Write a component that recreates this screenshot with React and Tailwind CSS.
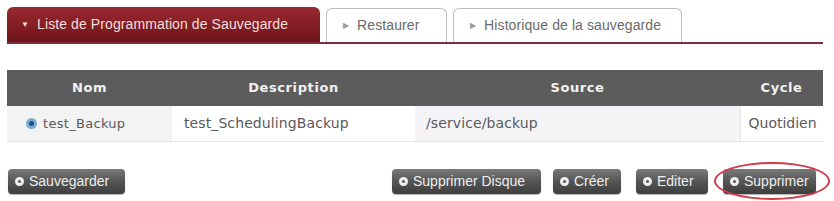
function Tab({ active, children }) {
  if (active) {
    return (
      <div className="flex h-[35px] w-[313px] items-center rounded-t-[6px] bg-gradient-to-b from-[#9a2a30] to-[#6e1419] pl-[14px] text-[14px] tracking-[0.1px] text-[#f3dede]">
        <span className="mr-[8px] text-[8px]">▼</span>
        {children}
      </div>
    );
  }
  return (
    <div className="mt-[1px] flex h-[34px] items-center rounded-t-[6px] border border-b-0 border-[#bdbdbd] bg-white pl-[16px] text-[14px] tracking-[0.1px] text-[#6a6a6a]">
      <span className="mr-[8px] text-[8px] text-[#999]">▶</span>
      {children}
    </div>
  );
}

function Btn({ children, w }) {
  return (
    <div
      className={`flex h-[25px] items-center rounded-[4px] bg-gradient-to-b from-[#7a7a7a] via-[#555] to-[#3e3e3e] pl-[7px] text-[14px] tracking-[0px] text-[#eeeeee] shadow-[0_1px_1px_rgba(0,0,0,0.3)] ${w}`}
    >
      <span className="mr-[5px] flex h-[9px] w-[9px] items-center justify-center rounded-full bg-[#eee]">
        <span className="block h-[3px] w-[3px] rounded-full bg-[#555]" />
      </span>
      {children}
    </div>
  );
}

export default function App() {
  return (
    <div className="h-[201px] w-[834px] bg-white font-['Liberation_Sans',Arial,sans-serif]">
      <div className="pl-[7px] pt-[7px]">
        <div className="flex w-[816px] items-end gap-[6px] border-b-2 border-[#7a3040]">
          <Tab active>Liste de Programmation de Sauvegarde</Tab>
          <div className="w-[121px]">
            <Tab>Restaurer</Tab>
          </div>
          <div className="w-[229px]">
            <Tab>Historique de la sauvegarde</Tab>
          </div>
        </div>
      </div>

      <div className="mt-[26px] pl-[7px]">
        <table className="w-[816px] border-collapse font-['DejaVu_Sans','Noto_Sans_CJK_KR',sans-serif] text-[14px]">
          <thead>
            <tr className="h-[36px] bg-[#5c5c5c] text-[13px] tracking-[0.6px] text-[#f2f2f2]">
              <th className="w-[165px] font-bold">Nom</th>
              <th className="w-[243px] font-bold">Description</th>
              <th className="w-[325px] font-bold">Source</th>
              <th className="font-bold">Cycle</th>
            </tr>
          </thead>
          <tbody>
            <tr className="h-[35px] border-b border-[#e6e6e6] text-[#5a5a5a]">
              <td className="bg-[#f3f3f3] pl-[19px] text-[13px] tracking-[0.3px]">
                <span className="flex items-center">
                  <span className="mr-[6px] flex h-[11px] w-[11px] items-center justify-center rounded-full bg-[#7aaed6]">
                    <span className="block h-[5px] w-[5px] rounded-full bg-[#1d4f7a]" />
                  </span>
                  test_Backup
                </span>
              </td>
              <td className="bg-white pl-[12px] tracking-[0.1px]">test_SchedulingBackup</td>
              <td className="bg-[#f4f4f7] pl-[11px] tracking-[0.1px]">/service/backup</td>
              <td className="border-l border-[#e6e6e6] bg-white pl-[8px] tracking-[0px]">Quotidien</td>
            </tr>
          </tbody>
        </table>
      </div>

      <div className="mt-[27px] flex items-center pl-[8px]">
        <Btn w="w-[117px]">Sauvegarder</Btn>
        <div className="ml-[267px] flex items-center">
          <Btn w="w-[149px]">Supprimer Disque</Btn>
          <div className="ml-[12px]">
            <Btn w="w-[68px]">Créer</Btn>
          </div>
          <div className="ml-[15px]">
            <Btn w="w-[72px]">Editer</Btn>
          </div>
          <div className="relative ml-[15px]">
            <Btn w="w-[93px]">Supprimer</Btn>
            <div className="pointer-events-none absolute left-[-9px] top-[-7px] h-[38px] w-[116px] rounded-[50%] border-2 border-[#d23a48]" />
          </div>
        </div>
      </div>
    </div>
  );
}
